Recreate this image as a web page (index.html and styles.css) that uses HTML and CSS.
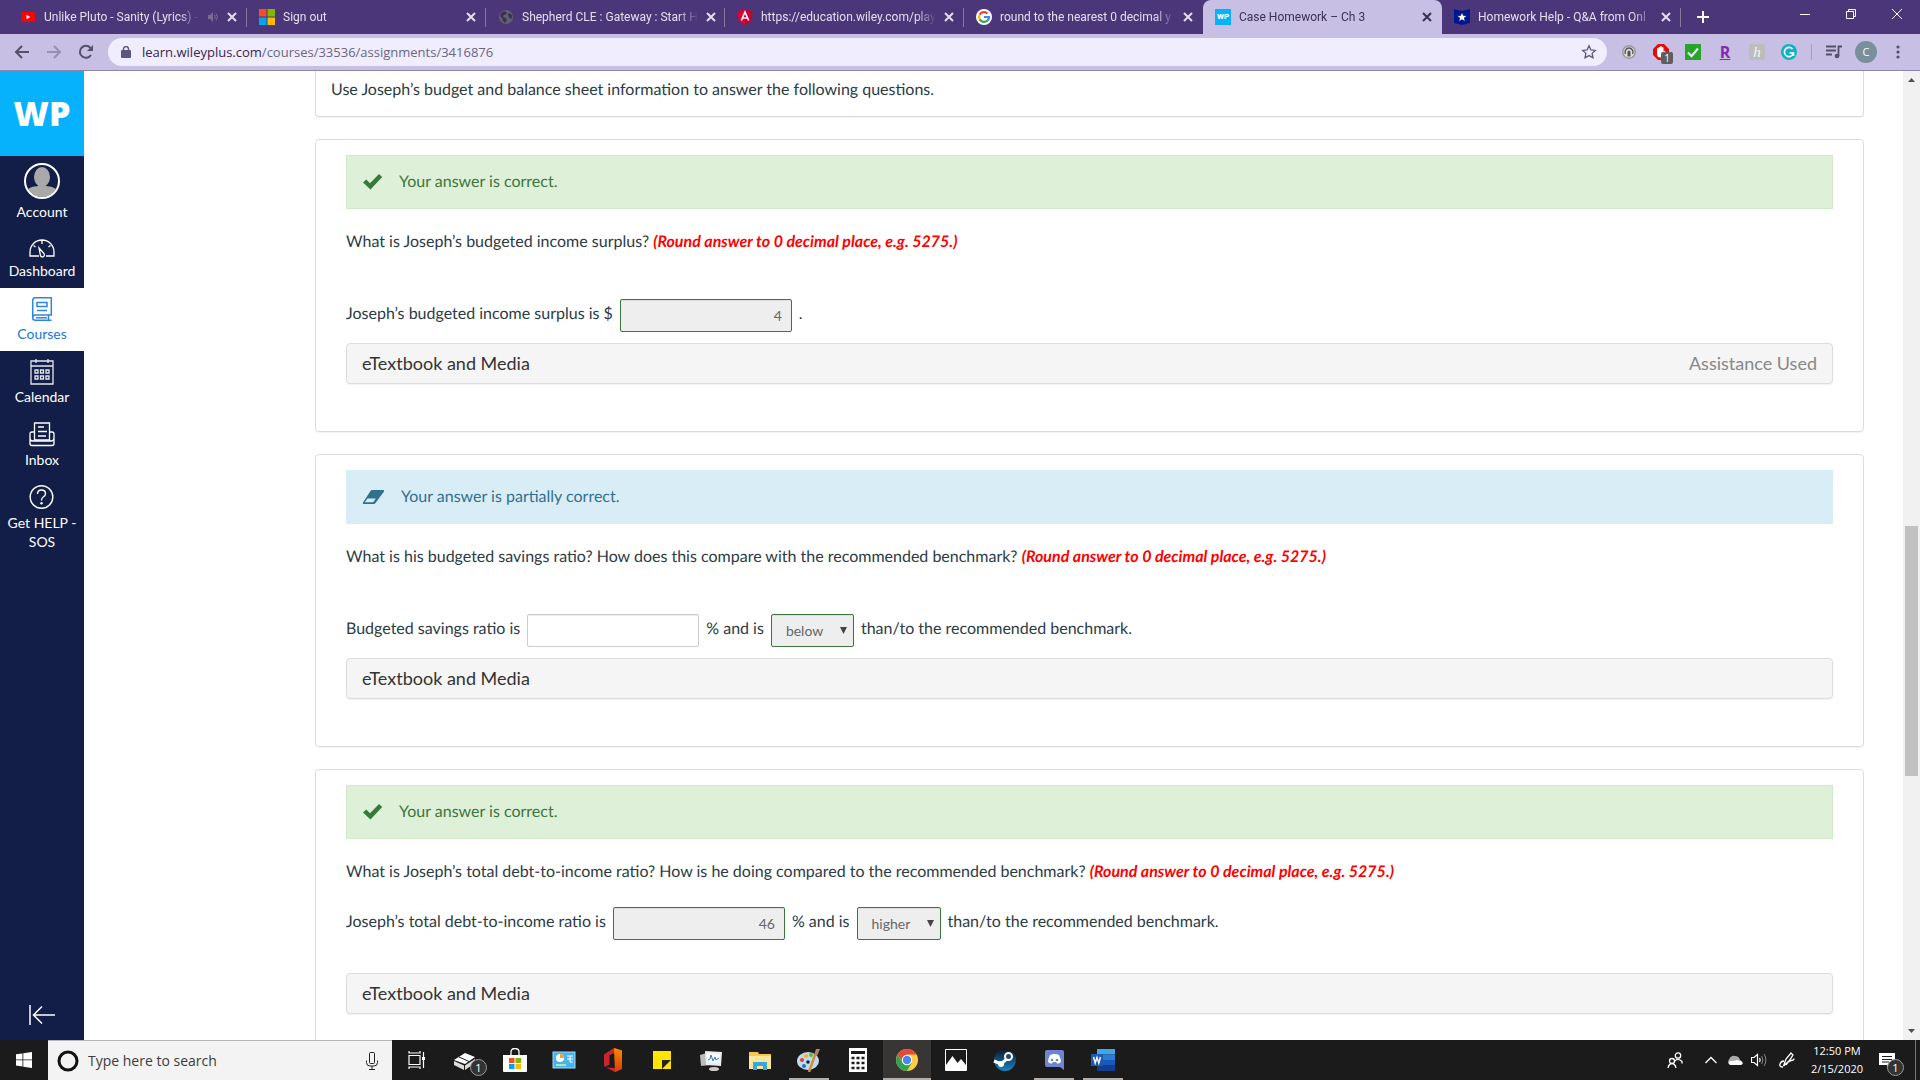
FILE: index.html
```html
<!DOCTYPE html>
<html lang="en">
<head>
    <meta charset="UTF-8">
    <meta name="viewport" content="width=device-width, initial-scale=1.0">
    <title>Case Homework – Ch 3</title>
    <link rel="stylesheet" href="styles.css">
</head>
<body>
    <!-- browser tabs -->
    <header class="tab-bar">
        <div class="tab">
            <svg class="favicon" viewBox="0 0 16 16"><rect x="1" y="3" width="14" height="10" rx="2" fill="#f00"/><path d="M6.5 5.800v4.400L10.300 8z" fill="#fff"/></svg>
            <span class="tab-title">Unlike Pluto - Sanity (Lyrics) -</span>
            <svg class="tab-sound" viewBox="0 0 12 12"><path d="M1 4h2l3-3v10L3 8H1z" fill="#786a94"/><path d="M7.500 4q1.500 2 0 4M9 2.500q3 3.500 0 7" fill="none" stroke="#786a94"/></svg>
            <button class="tab-close" aria-label="Close tab"><svg viewBox="0 0 10 10"><path d="M1 1l8 8M9 1L1 9"/></svg></button>
        </div>
        <div class="tab">
            <svg class="favicon" viewBox="0 0 16 16"><path d="M0 0h7.500v7.500H0z" fill="#f25022"/><path d="M8.500 0H16v7.500H8.500z" fill="#7fba00"/><path d="M0 8.500h7.500V16H0z" fill="#00a4ef"/><path d="M8.500 8.500H16V16H8.500z" fill="#ffb900"/></svg>
            <span class="tab-title">Sign out</span>
            <button class="tab-close" aria-label="Close tab"><svg viewBox="0 0 10 10"><path d="M1 1l8 8M9 1L1 9"/></svg></button>
        </div>
        <div class="tab">
            <svg class="favicon" viewBox="0 0 16 16"><circle cx="8" cy="8" r="7" fill="#5f6368"/><path d="M3 4l3-2 2 1 1 2-3 1-1 2 3 1 1 2-2 3-2-2-1-3-2-2zM11 4l3 2v3l-2 1-1-2-1-2z" fill="#3c2f60"/></svg>
            <span class="tab-title">Shepherd CLE : Gateway : Start H</span>
            <button class="tab-close" aria-label="Close tab"><svg viewBox="0 0 10 10"><path d="M1 1l8 8M9 1L1 9"/></svg></button>
        </div>
        <div class="tab">
            <svg class="favicon" viewBox="0 0 16 16"><path d="M8 0l7.500 2.700L14.300 12 8 16l-6.300-4L.5 2.700z" fill="#dd0031"/><path d="M8 0l7.500 2.700L14.300 12 8 16z" fill="#c3002f"/><path d="M4.300 11.500L8 3l3.700 8.500M5.700 9h4.600" fill="none" stroke="#fff" stroke-width="1.600"/></svg>
            <span class="tab-title">https://education.wiley.com/play</span>
            <button class="tab-close" aria-label="Close tab"><svg viewBox="0 0 10 10"><path d="M1 1l8 8M9 1L1 9"/></svg></button>
        </div>
        <div class="tab no-sep">
            <svg class="favicon" viewBox="0 0 16 16"><circle cx="8" cy="8" r="8" fill="#fff"/><g fill="none" stroke-width="2.200"><path d="M11.500 4.500A5 5 0 0 0 3.700 5.600" stroke="#ea4335"/><path d="M3.700 5.600a5 5 0 0 0 0 4.800" stroke="#fbbc05"/><path d="M3.700 10.400a5 5 0 0 0 7.600 1.300" stroke="#34a853"/><path d="M11.300 11.700Q13 10.300 13 8H8" stroke="#4285f4"/></g></svg>
            <span class="tab-title">round to the nearest 0 decimal y</span>
            <button class="tab-close" aria-label="Close tab"><svg viewBox="0 0 10 10"><path d="M1 1l8 8M9 1L1 9"/></svg></button>
        </div>
        <div class="tab active no-sep">
            <span class="favicon wp-favicon">WP</span>
            <span class="tab-title">Case Homework – Ch 3</span>
            <button class="tab-close" aria-label="Close tab"><svg viewBox="0 0 10 10"><path d="M1 1l8 8M9 1L1 9"/></svg></button>
        </div>
        <div class="tab">
            <svg class="favicon" viewBox="0 0 16 16"><path d="M0 0l8 2 8-2v14l-8 2-8-2z" fill="#00188f"/><path d="M8 4l1.200 2.800 3 .2-2.300 2 .8 3L8 10.300 5.300 12l.8-3-2.300-2 3-.2z" fill="#fff"/></svg>
            <span class="tab-title">Homework Help - Q&amp;A from Onl</span>
            <button class="tab-close" aria-label="Close tab"><svg viewBox="0 0 10 10"><path d="M1 1l8 8M9 1L1 9"/></svg></button>
        </div>
        <button class="new-tab" aria-label="New tab"><svg viewBox="0 0 12 12"><path d="M6 0v12M0 6h12" stroke="#fff" stroke-width="2"/></svg></button>
        <div class="window-buttons">
            <button aria-label="Minimize"><svg viewBox="0 0 10 10"><path d="M0 5.500h10"/></svg></button>
            <button aria-label="Restore"><svg viewBox="0 0 10 10"><path d="M.5 2.500h7v7h-7zM2.500 2.500v-2h7v7h-2"/></svg></button>
            <button aria-label="Close"><svg viewBox="0 0 10 10"><path d="M0 0l10 10M10 0L0 10"/></svg></button>
        </div>
    </header>

    <!-- address bar -->
    <div class="toolbar">
        <button class="tool" aria-label="Back"><svg viewBox="0 0 16 16"><path d="M15 8H2M8 2L2 8l6 6" fill="none" stroke="#54516a" stroke-width="2"/></svg></button>
        <button class="tool" aria-label="Forward"><svg viewBox="0 0 16 16"><path d="M1 8h13M8 2l6 6-6 6" fill="none" stroke="#9890b0" stroke-width="2"/></svg></button>
        <button class="tool" aria-label="Reload"><svg viewBox="0 0 16 16"><path d="M13 11a6 6 0 1 1-.6-7.200" fill="none" stroke="#54516a" stroke-width="2"/><path d="M15 1v6H9z" fill="#54516a"/></svg></button>
        <div class="omnibox">
            <svg class="lock" viewBox="0 0 10 12"><rect x="0" y="4" width="10" height="8" rx="1" fill="#5f5580"/><path d="M2.500 5V3a2.500 2.500 0 0 1 5 0v2" fill="none" stroke="#5f5580" stroke-width="1.400"/></svg>
            <span class="url"><b>learn.wileyplus.com</b>/courses/33536/assignments/3416876</span>
            <svg class="star" viewBox="0 0 16 16"><path d="M8 1.800l1.900 4.100 4.400.5-3.200 3 .9 4.400L8 11.600l-4 2.200.9-4.400-3.200-3 4.400-.5z" fill="none" stroke="#5f5580" stroke-width="1.300"/></svg>
        </div>
        <div class="extensions">
            <svg viewBox="0 0 16 16"><circle cx="8" cy="8" r="7" fill="#999"/><circle cx="8" cy="8" r="5.500" fill="#ddd"/><path d="M4.500 10a4 4 0 1 1 7 0" fill="none" stroke="#555" stroke-width="1.400"/><path d="M6.500 12.500V8a1.500 1.500 0 0 1 3 0v4.500z" fill="#555"/></svg>
            <span class="blocker">
                <svg viewBox="0 0 16 16"><path d="M5 0h6l5 5v6l-5 5H5l-5-5V5z" fill="#e60b0b"/><path d="M4 7V4.500q.8-1 1.600 0V3.200q.8-1 1.600 0v-.8q.8-1 1.600 0v1q.9-1 1.700 0v4.200l1-.9q1.200 0 .8 1L10.500 12q-1 1.500-3 1.500Q4 13.500 4 10z" fill="#fff"/></svg>
                <span class="blocker-count">1</span>
            </span>
            <svg viewBox="0 0 16 16"><path d="M0 0h16v16H0z" fill="#28a428"/><path d="M3 8.500l3.500 3.700L13 4.500" fill="none" stroke="#e8e8f8" stroke-width="2.200"/></svg>
            <span class="ext-r">R</span>
            <span class="ext-h">h</span>
            <svg viewBox="0 0 16 16"><circle cx="8" cy="8" r="8" fill="#10b2c8"/><path d="M11.500 5a4.600 4.600 0 1 0 1 4H8.500M12.500 8.500v3.500" fill="none" stroke="#fff" stroke-width="1.600"/></svg>
        </div>
        <div class="toolbar-end">
            <svg viewBox="0 0 16 14"><path d="M0 1.500h10M0 5.500h10M0 9.500h6" stroke="#54516a" stroke-width="1.800"/><path d="M12.500 11V1.500H16" fill="none" stroke="#54516a" stroke-width="1.800"/><circle cx="11" cy="11" r="2.300" fill="#54516a"/></svg>
            <span class="profile">C</span>
            <svg viewBox="0 0 16 16"><g fill="#54516a"><circle cx="8" cy="3" r="1.600"/><circle cx="8" cy="8" r="1.600"/><circle cx="8" cy="13" r="1.600"/></g></svg>
        </div>
    </div>

    <!-- page -->
    <div class="page">
        <nav class="sidebar">
            <a href="#" class="logo">WP</a>
            <a href="#" class="nav-item account">
                <svg viewBox="0 0 36 36"><defs><clipPath id="face"><circle cx="18" cy="18" r="16"/></clipPath></defs><g clip-path="url(#face)" fill="#a9a9a9"><ellipse cx="18" cy="14" rx="8" ry="10"/><path d="M14 20h8v3q12 1 12 7v6H2v-6q0-6 12-7z"/></g><circle cx="18" cy="18" r="17" fill="none" stroke="#fff" stroke-width="2"/></svg>
                <span>Account</span>
            </a>
            <a href="#" class="nav-item">
                <svg viewBox="0 0 26 26"><g fill="none" stroke="#fff" stroke-width="1.300"><path d="M10 23H1v-4a12 12 0 0 1 24 0v4h-8M13 7v4M4.500 12.500l2 1.500M21.500 12.500l-2 1.500"/><path d="M10 15l5 5.500q1 2.500-1 3.300-2 .5-2.600-1.600z"/></g></svg>
                <span>Dashboard</span>
            </a>
            <a href="#" class="nav-item current">
                <svg viewBox="0 0 26 26"><g fill="none" stroke="#2d86e0" stroke-width="1.500"><path d="M3.700 22V4.500q0-2.800 2.500-2.800h16.100V19H6.500q-2.800 0-2.800 2.800 0 2.500 2.800 2.500h16M19.500 19v5M7 21.700h11"/><path d="M8 6.500h10v4H8zM8 14.500h10"/></g></svg>
                <span>Courses</span>
            </a>
            <a href="#" class="nav-item">
                <svg viewBox="0 0 26 26"><g fill="none" stroke="#e4e6ee" stroke-width="1.300"><path d="M2 2h22v23H2zM2 7h22M7 0v4M19 0v4"/><path d="M6 11h3v3H6zM11.500 11h3v3h-3zM17 11h3v3h-3zM6 17h3v3H6zM11.500 17h3v3h-3zM17 17h3v3h-3z"/></g></svg>
                <span>Calendar</span>
            </a>
            <a href="#" class="nav-item">
                <svg viewBox="0 0 26 26"><g fill="none" stroke="#fff" stroke-width="1.300"><path d="M5.500 18V1h15v17zM9 5h6M9 9.500h9M9 14h8"/><path d="M5.500 10H3q-2 0-2 2v9.500q0 2 2 2h20q2 0 2-2V12q0-2-2-2h-2.500M1 16q0 3 3 3h18q3 0 3-3"/></g></svg>
                <span>Inbox</span>
            </a>
            <a href="#" class="nav-item">
                <svg viewBox="0 0 26 26"><g fill="none" stroke="#fff" stroke-width="1.400"><circle cx="12.500" cy="12" r="11.300"/><path d="M8.500 9q0-4 4-4t4 3.700q0 2-2.300 3.300-1.700 1-1.700 3.500"/></g><circle cx="12.500" cy="18.300" r="1.200" fill="#fff"/></svg>
                <span>Get HELP - SOS</span>
            </a>
            <button class="collapse" aria-label="Minimize navigation"><svg viewBox="0 0 26 20"><path d="M1 0v20M26 10H5M13 1.500L4.500 10l8.500 8.500" fill="none" stroke="#fff" stroke-width="1.500"/></svg></button>
        </nav>

        <main class="content">
            <section class="panel intro">
                <p>Use Joseph’s budget and balance sheet information to answer the following questions.</p>
            </section>

            <section class="panel">
                <div class="alert correct">
                    <svg viewBox="0 0 20 16"><path d="M0 8.500L3.300 5.500 7 9.200 16 0l3.200 3L7.500 15.500z" fill="#367b38"/></svg>
                    Your answer is correct.
                </div>
                <p class="question">What is Joseph’s budgeted income surplus? <em>(Round answer to 0 decimal place, e.g. 5275.)</em></p>
                <div class="answer">
                    <label for="surplus">Joseph’s budgeted income surplus is $</label>
                    <input type="text" id="surplus" class="graded" value="4" readonly>
                    <span>.</span>
                </div>
                <button class="media"><span>eTextbook and Media</span><span class="used">Assistance Used</span></button>
            </section>

            <section class="panel">
                <div class="alert partial">
                    <svg class="eraser" viewBox="0 0 23 16"><path d="M10 1h11.500q1 .3.500 1.500L13.500 14q-.7 1-1.500 1H1.500Q.3 14.600 1 13.500L8.500 2q.7-1 1.500-1z" fill="#31708f"/><path d="M5.500 9.500h8.300l-2.600 3.800H2.800z" fill="#d9edf7"/></svg>
                    Your answer is partially correct.
                </div>
                <p class="question">What is his budgeted savings ratio? How does this compare with the recommended benchmark? <em>(Round answer to 0 decimal place, e.g. 5275.)</em></p>
                <div class="answer">
                    <label for="savings">Budgeted savings ratio is</label>
                    <input type="text" id="savings">
                    <label for="savings-compare">% and is</label>
                    <span class="picker">
                        <select id="savings-compare"><option>below</option></select>
                        <svg viewBox="0 0 8 7"><path d="M0 0h7L3.500 7z" fill="#444"/></svg>
                    </span>
                    <span>than/to the recommended benchmark.</span>
                </div>
                <button class="media"><span>eTextbook and Media</span></button>
            </section>

            <section class="panel compact">
                <div class="alert correct">
                    <svg viewBox="0 0 20 16"><path d="M0 8.500L3.300 5.500 7 9.200 16 0l3.200 3L7.500 15.500z" fill="#367b38"/></svg>
                    Your answer is correct.
                </div>
                <p class="question">What is Joseph’s total debt-to-income ratio? How is he doing compared to the recommended benchmark? <em>(Round answer to 0 decimal place, e.g. 5275.)</em></p>
                <div class="answer">
                    <label for="debt">Joseph’s total debt-to-income ratio is</label>
                    <input type="text" id="debt" class="graded" value="46" readonly>
                    <label for="debt-compare">% and is</label>
                    <span class="picker">
                        <select id="debt-compare"><option>higher</option></select>
                        <svg viewBox="0 0 8 7"><path d="M0 0h7L3.500 7z" fill="#444"/></svg>
                    </span>
                    <span>than/to the recommended benchmark.</span>
                </div>
                <button class="media"><span>eTextbook and Media</span></button>
            </section>
        </main>

        <div class="scrollbar">
            <svg viewBox="0 0 7 4"><path d="M0 4h7L3.500 0z" fill="#505050"/></svg>
            <div class="track"><div class="thumb"></div></div>
            <svg viewBox="0 0 7 4"><path d="M0 0h7L3.500 4z" fill="#505050"/></svg>
        </div>
    </div>

    <!-- windows taskbar -->
    <footer class="taskbar">
        <button class="start" aria-label="Start"><svg viewBox="0 0 16 16"><path d="M0 2.300l6.500-.9v6.100H0zM7.300 1.300L16 0v7.500H7.300zM0 8.300h6.500v6.200L0 13.600zM7.300 8.300H16V16l-8.700-1.300z" fill="#fff"/></svg></button>
        <div class="search">
            <svg class="cortana" viewBox="0 0 22 22"><circle cx="11" cy="11" r="9" fill="none" stroke="#111" stroke-width="3"/></svg>
            <input type="text" placeholder="Type here to search" aria-label="Search">
            <svg class="mic" viewBox="0 0 12 18"><g fill="none" stroke="#222"><rect x="3.500" y=".5" width="5" height="11" rx="1"/><path d="M.5 8.500v2q0 3.500 3.500 3.500h4q3.500 0 3.500-3.500v-2M6 14v3.500M3 17.500h6"/></g></svg>
        </div>
        <div class="apps">
            <button aria-label="Task view"><svg viewBox="0 0 24 24"><g fill="none" stroke="#fff" stroke-width="1.200"><path d="M4 7.500h11v9H4zM4 3v2h11V3M4 21v-2h11v2M18.500 4v16"/></g><path d="M17 9h3v3h-3z" fill="#fff"/></svg></button>
            <button aria-label="Inventory"><svg viewBox="0 0 24 24"><path d="M0 12L11 5l10 4-10 7z" fill="#fff"/><path d="M0 13l10 4.500v4.500L0 17zM11 17.500L21 11v4l-10 7z" fill="#ddd"/><path d="M5 9l10 4.500" stroke="#1b1b1b"/></svg><span class="count">1</span></button>
            <button aria-label="Store"><svg viewBox="0 0 24 24"><path d="M0 7h24v16q0 1-1 1H1q-1 0-1-1z" fill="#fff"/><path d="M8 9V4q0-3.500 4-3.500T16 4v5" fill="none" stroke="#fff" stroke-width="1.300"/><path d="M6 10h5.500v5H6z" fill="#f25022"/><path d="M12.500 10H18v5h-5.500z" fill="#7fba00"/><path d="M6 16h5.500v5H6z" fill="#00a4ef"/><path d="M12.500 16H18v5h-5.500z" fill="#ffb900"/></svg></button>
            <button aria-label="Control panel"><svg viewBox="0 0 24 24"><rect x="1" y="4" width="22" height="16" fill="#48b4ec" stroke="#9adcff"/><circle cx="8" cy="10" r="4" fill="#fff"/><path d="M8 10V6a4 4 0 0 1 4 4z" fill="#f7a030"/><path d="M4 17h10" stroke="#d8f0a0" stroke-width="1.500"/><path d="M15 8h6M15 11h6M18 8v6h3" stroke="#fff" fill="none"/></svg></button>
            <button aria-label="Office"><svg viewBox="0 0 24 24"><defs><linearGradient id="office" x2="0" y2="1"><stop offset="0" stop-color="#ff8a00"/><stop offset="1" stop-color="#d83b01"/></linearGradient></defs><path d="M3 6.500L13 0l8 2.500V21l-7 3-9-4.500 9 .5V5L8.500 7v9.500L4 19q-1-1-1-3z" fill="#c9252d"/><path d="M13 0l8 2.500V21l-7 3z" fill="url(#office)"/></svg></button>
            <button aria-label="Sticky notes"><svg viewBox="0 0 24 24"><path d="M3 3h18v18H3z" fill="#ffe400"/><path d="M12 21v-9h9z" fill="#222"/></svg></button>
            <button aria-label="Performance monitor"><svg viewBox="0 0 24 24"><path d="M1 7l10-3v13l-9 1z" fill="#b9bdbf"/><path d="M6 3l17 1-1 14-15-1z" fill="#ececec"/><path d="M8 5l13 1-1 9-12-1z" fill="#f7fbff"/><path d="M9 12l2-1 1-4 2 6 2-4 1 3 3-2" fill="none" stroke="#2684c0"/><ellipse cx="15" cy="21" rx="5" ry="2" fill="#ccc"/></svg></button>
            <button aria-label="File explorer"><svg viewBox="0 0 24 24"><path d="M1 4h9l1 2h12v15H1z" fill="#f5c84c"/><path d="M1 8h22v13H1z" fill="#ffe59a"/><path d="M5 22v-8h14v8h-4v-4H9v4z" fill="#34a7dc"/></svg></button>
            <button class="open" aria-label="Paint"><svg viewBox="0 0 24 24"><ellipse cx="11" cy="13" rx="11" ry="9" fill="#bddcf0"/><circle cx="11" cy="14" r="1.800" fill="#222"/><circle cx="5" cy="12" r="2" fill="#e43c32"/><circle cx="9" cy="8" r="2" fill="#f7b11e"/><circle cx="14" cy="7" r="2" fill="#67b244"/><circle cx="7" cy="18" r="2" fill="#286bcc"/><path d="M12 24l6-17" stroke="#d98b38" stroke-width="2.500"/><path d="M17 7l2-6h4l-3 7z" fill="#b4825b"/></svg></button>
            <button aria-label="Calculator"><svg viewBox="0 0 24 24"><path d="M3 0h18v24H3z" fill="#fff"/><path d="M5 3h14v3H5z" fill="#1b1b1b"/><path d="M5.500 10h3M10.500 10h3M15.500 10h3M5.500 15h3M10.500 15h3M15.500 15h3M5.500 20h3M10.500 20h3M15.500 20h3" stroke="#1b1b1b" stroke-width="2.500"/></svg></button>
            <button class="open focused" aria-label="Chrome"><svg viewBox="0 0 24 24"><circle cx="12" cy="12" r="11" fill="#fc4"/><path d="M2.500 6.500A11 11 0 0 1 21.500 6.500H12L7.500 14z" fill="#e24a3b"/><path d="M2.500 6.500A11 11 0 0 0 12 23l4.800-8.300-9.300-.2z" fill="#34a255"/><circle cx="12" cy="12" r="5.200" fill="#fff"/><circle cx="12" cy="12" r="4.200" fill="#4489f1"/></svg></button>
            <button aria-label="Photos"><svg viewBox="0 0 24 24"><path d="M1.500 1.500h21v21h-21z" fill="#1b1b1b" stroke="#fff"/><path d="M2 17l6.500-9 5 7 3.500-4 5 6v5H2z" fill="#fff"/></svg></button>
            <button aria-label="Steam"><svg viewBox="0 0 24 24"><defs><linearGradient id="steam" x2="0" y2="1"><stop offset="0" stop-color="#10172f"/><stop offset="1" stop-color="#1687c4"/></linearGradient></defs><circle cx="12" cy="12" r="11" fill="url(#steam)"/><path d="M1 13l7 3 7-6" stroke="#fff" stroke-width="3" fill="none"/><circle cx="8" cy="16" r="3" fill="#fff"/><circle cx="15.500" cy="8.500" r="3.500" fill="#24456c" stroke="#fff" stroke-width="2"/></svg></button>
            <button class="open" aria-label="Discord"><svg viewBox="0 0 24 24"><path d="M5 2h15q2 0 2 2v18l-4-3H5q-2 0-2-2V4q0-2 2-2z" fill="#6f85d0"/><path d="M8 7q5-2 9 0 2 4 2 7-2 2-4 1.500l-1-1.500h-3l-1 1.500q-2 .5-4-1.500 0-3 2-7z" fill="#fff"/><circle cx="10" cy="12" r="1.300" fill="#6f85d0"/><circle cx="15" cy="12" r="1.300" fill="#6f85d0"/></svg></button>
            <button class="open" aria-label="Word"><svg viewBox="0 0 24 24"><path d="M6 1h18v5.500H6z" fill="#41a5ee"/><path d="M6 6.500h18V12H6z" fill="#2b7cd3"/><path d="M6 12h18v5.500H6z" fill="#185abd"/><path d="M6 17.500h18V23H6z" fill="#103f91"/><path d="M0 6h12v12H0z" fill="#2059b0"/><path d="M2.500 9l1.700 6L6 9.500 7.800 15l1.700-6" fill="none" stroke="#fff" stroke-width="1.400"/></svg></button>
        </div>
        <div class="tray">
            <svg class="people" viewBox="0 0 16 16"><g fill="none" stroke="#fff" stroke-width="1.300"><circle cx="11" cy="3.500" r="2.700"/><circle cx="5" cy="9" r="2.500"/><path d="M8 9q3-3.500 7 .5v2M1 16q1-4.500 4-4.500T9 16"/></g></svg>
            <svg viewBox="0 0 16 16"><path d="M2.500 11L8 5.500l5.500 5.500" fill="none" stroke="#fff" stroke-width="1.300"/></svg>
            <svg viewBox="0 0 16 16"><path d="M2 12q-2-2 0-4.500Q4 3 8 4q4 0 5 4 3 1 2.500 4z" fill="#aaa"/><path d="M3 13q-2-1-1-3 2-2 5-1 3-2 6 0 3 .5 2.500 3-.5 1-2 1z" fill="#fff"/></svg>
            <svg viewBox="0 0 16 16"><path d="M.5 5.500H3l3.500-3v11L3 10.500H.5zM8.500 6q1.200 2 0 4" fill="none" stroke="#fff" stroke-width="1.200"/><path d="M10.700 4q2.600 4 0 8M13 2q3.800 6 0 12" fill="none" stroke="#888"/></svg>
            <svg class="pen" viewBox="0 0 16 16"><path d="M4 15q-4 0-3-3t4-3M4.500 14L7 7l5-6 2 2-4 6zM7 13q2-4 5-4.500 3 0 3-2" fill="none" stroke="#fff" stroke-width="1.300"/></svg>
            <div class="clock"><span>12:50 PM</span><span>2/15/2020</span></div>
            <button class="notifications" aria-label="Notifications"><svg viewBox="0 0 16 16"><path d="M0 1h16v12h-5l-3 3v-3H0z" fill="#fff"/><path d="M3 4.500h10M3 7.500h10M3 10h7" stroke="#1b1b1b"/></svg><span class="count">1</span></button>
        </div>
    </footer>
</body>
</html>
```

FILE: styles.css
```css
* {
    box-sizing: border-box;
}

body {
    margin: 0;
    height: 100vh;
    display: flex;
    flex-direction: column;
    overflow: hidden;
    background-color: #fff;
    font-family: Lato, sans-serif;
    color: #2d3b45;
}

button {
    padding: 0;
    border: none;
    background: none;
    font-family: inherit;
    color: inherit;
    cursor: pointer;
}

svg {
    display: block;
    flex-shrink: 0;
}

/* tabs */
.tab-bar {
    display: flex;
    height: 34px;
    flex-shrink: 0;
    padding-left: 8px;
    background-color: #4b367a;
    font-family: Roboto, sans-serif;
    font-size: 12px;
    color: #e4deee;
}

.tab {
    display: flex;
    align-items: center;
    flex: 0 1 239px;
    min-width: 0;
    gap: 8px;
    padding: 0 10px 0 12px;
    position: relative;
}

.tab::after {
    content: "";
    position: absolute;
    right: 0;
    top: 8px;
    width: 1px;
    height: 19px;
    background-color: #87789f;
}

.tab.no-sep::after {
    display: none;
}

.tab.active {
    background-color: #c8bfe4;
    border-radius: 8px 8px 0 0;
    color: #3c3154;
}

.favicon {
    width: 16px;
    height: 16px;
    flex-shrink: 0;
}

.wp-favicon {
    background-color: #07b2fa;
    color: #fff;
    font-size: 8px;
    font-weight: 800;
    line-height: 16px;
    text-align: center;
}

.tab-title {
    flex: 1;
    white-space: nowrap;
    -webkit-mask-image: linear-gradient(to right, #000 calc(100% - 20px), transparent);
    mask-image: linear-gradient(to right, #000 calc(100% - 20px), transparent);
}

.tab-sound {
    width: 12px;
    height: 12px;
}

.tab-close svg {
    width: 10px;
    height: 10px;
    stroke: currentColor;
    stroke-width: 2;
}

.new-tab {
    width: 44px;
    display: flex;
    align-items: center;
    justify-content: center;
}

.new-tab svg {
    width: 12px;
}

.window-buttons {
    display: flex;
    margin-left: auto;
}

.window-buttons button {
    width: 46px;
    height: 28px;
    display: flex;
    align-items: center;
    justify-content: center;
}

.window-buttons svg {
    width: 10px;
    height: 10px;
    fill: none;
    stroke: #fff;
}

/* toolbar */
.toolbar {
    display: flex;
    align-items: center;
    height: 37px;
    flex-shrink: 0;
    padding: 0 14px;
    background-color: #c8bfe4;
    border-bottom: 1px solid #8f84a9;
    font-family: "Open Sans", sans-serif;
}

.tool {
    width: 16px;
    margin-right: 16px;
}

.omnibox {
    flex: 1;
    display: flex;
    align-items: center;
    height: 28px;
    padding: 0 10px 0 13px;
    margin-right: 14px;
    margin-left: -2px;
    border-radius: 14px;
    background-color: #f0edff;
}

.lock {
    width: 10px;
    height: 12px;
    margin-right: 11px;
}

.url {
    flex: 1;
    font-size: 13px;
    color: #6a6580;
}

.url b {
    font-weight: normal;
    color: #35284f;
}

.star {
    width: 16px;
}

.extensions {
    display: flex;
    gap: 16px;
    padding-right: 14px;
    border-right: 1px solid #a89fc0;
}

.extensions svg {
    width: 16px;
    height: 16px;
}

.blocker {
    position: relative;
}

.blocker-count {
    position: absolute;
    left: 8px;
    top: 8px;
    width: 12px;
    height: 12px;
    border-radius: 2px;
    background-color: #5e5e5e;
    color: #fff;
    font-size: 10px;
    line-height: 12px;
    text-align: center;
}

.ext-r,
.ext-h {
    width: 16px;
    height: 16px;
    line-height: 16px;
    text-align: center;
}

.ext-r {
    color: #8529b0;
    font-size: 16px;
    font-weight: bold;
    text-decoration: underline;
}

.ext-h {
    border-radius: 2px;
    background-color: #bdbdbd;
    color: #f5f5f5;
    font-family: "Liberation Serif", serif;
    font-size: 15px;
    font-style: italic;
}

.toolbar-end {
    display: flex;
    align-items: center;
    gap: 13px;
    padding-left: 14px;
}

.toolbar-end svg {
    width: 16px;
}

.profile {
    width: 22px;
    height: 22px;
    border-radius: 50%;
    background-color: #78909c;
    color: #fff;
    font-size: 11px;
    line-height: 22px;
    text-align: center;
}

/* page */
.page {
    flex: 1;
    display: flex;
    min-height: 0;
}

.sidebar {
    width: 84px;
    flex-shrink: 0;
    display: flex;
    flex-direction: column;
    background-color: #121e48;
}

.logo {
    height: 85px;
    background-color: #07b2fc;
    color: #fff;
    font-family: "Open Sans", sans-serif;
    font-size: 34px;
    font-weight: 800;
    line-height: 85px;
    text-align: center;
    text-decoration: none;
}

.nav-item {
    display: flex;
    flex-direction: column;
    align-items: center;
    gap: 2px;
    padding: 8px 6px;
    color: #fff;
    font-size: 14px;
    line-height: 19px;
    text-align: center;
    text-decoration: none;
}

.nav-item svg {
    width: 26px;
    height: 26px;
}

.nav-item.account {
    gap: 3px;
    padding: 7px 6px 4px;
}

.nav-item.account svg {
    width: 36px;
    height: 36px;
}

.nav-item.current {
    background-color: #fff;
    color: #1676dd;
}

.collapse {
    margin-top: auto;
    height: 50px;
}

.collapse svg {
    width: 26px;
    margin: 0 auto;
}

.content {
    flex: 1;
    min-width: 0;
    overflow: hidden;
    padding: 0 39px 0 231px;
    font-size: 16px;
    line-height: 24px;
    text-rendering: geometricPrecision;
}

.panel {
    margin-bottom: 22px;
    padding: 15px 30px 47px;
    border: 1px solid #dcdcdc;
    border-radius: 4px;
    box-shadow: 0 1px 1px rgba(0, 0, 0, 0.05);
}

.panel.intro {
    padding: 7px 15px 14px;
    border-top: none;
    border-radius: 0 0 4px 4px;
}

.panel p {
    margin: 0;
}

.alert {
    display: flex;
    align-items: center;
    gap: 16px;
    height: 54px;
    padding: 0 16px;
}

.alert svg {
    width: 20px;
    height: 16px;
}

.alert .eraser {
    width: 23px;
    height: 16px;
}

.alert.correct {
    background-color: #dff0d8;
    border: 1px solid #d0e9c6;
    color: #3c763d;
}

.alert.partial {
    background-color: #d9edf7;
    color: #31708f;
}

.panel .question {
    margin: 21px 0 45px;
}

.question em {
    color: #f00;
    font-weight: bold;
}

.answer {
    display: flex;
    align-items: center;
    gap: 7px;
    height: 33px;
    margin-bottom: 11px;
}

.answer > label,
.answer > span:not(.picker) {
    padding-bottom: 3px;
}

.compact .question {
    margin-bottom: 23px;
}

.compact .answer {
    margin-bottom: 33px;
}

.answer input,
.answer select {
    height: 33px;
    border: 1px solid #ccc;
    border-radius: 2px;
    font-family: inherit;
    font-size: 14px;
    color: #666;
    box-shadow: inset 0 1px 1px rgba(0, 0, 0, 0.075);
}

.answer input {
    width: 172px;
    padding: 0 9px;
    text-align: right;
}

.answer .graded,
.answer select {
    border-color: #3c763d;
    background-color: #eee;
}

.picker {
    position: relative;
}

.picker select {
    display: block;
    appearance: none;
    padding: 0 29px 0 14px;
}

.picker svg {
    position: absolute;
    right: 6px;
    top: 13px;
    width: 8px;
    height: 7px;
}

.media {
    display: flex;
    align-items: center;
    justify-content: space-between;
    width: 100%;
    height: 41px;
    padding: 0 15px 2px;
    border: 1px solid #ddd;
    border-radius: 4px;
    background-color: #f5f5f5;
    color: #333;
    font-size: 18px;
    box-shadow: 0 1px 1px rgba(0, 0, 0, 0.05);
}

.used {
    color: #888;
}

.scrollbar {
    width: 17px;
    display: flex;
    flex-direction: column;
    align-items: center;
    padding: 7px 2px;
    background-color: #f1f1f1;
}

.scrollbar svg {
    width: 7px;
    height: 4px;
}

.track {
    flex: 1;
    width: 100%;
    display: flex;
    flex-direction: column;
}

.track::before {
    content: "";
    flex: 444;
}

.track::after {
    content: "";
    flex: 253;
}

.thumb {
    flex: 250;
    background-color: #c1c1c1;
}

/* taskbar */
.taskbar {
    display: flex;
    height: 40px;
    flex-shrink: 0;
    background-color: #1b1b1b;
    color: #fff;
    font-family: "Open Sans", sans-serif;
}

.start {
    width: 48px;
}

.start svg {
    width: 16px;
    margin: 0 auto;
}

.search {
    width: 344px;
    display: flex;
    align-items: center;
    padding: 0 14px 0 9px;
    border-top: 1px solid #b5b5b5;
    background-color: #f3f3f3;
}

.cortana {
    width: 22px;
}

.search input {
    flex: 1;
    min-width: 0;
    padding: 0 9px;
    border: none;
    background: none;
    font-family: "Open Sans", sans-serif;
    font-size: 14px;
}

.search input::placeholder {
    color: #3c3c3c;
}

.mic {
    width: 12px;
}

.apps {
    display: flex;
    gap: 1px;
    padding-left: 1px;
}

.apps button {
    width: 48px;
    display: flex;
    align-items: center;
    justify-content: center;
    position: relative;
}

.apps svg {
    width: 24px;
}

.apps .open::after {
    content: "";
    position: absolute;
    left: 4px;
    right: 4px;
    bottom: 0;
    height: 2px;
    background-color: #b3aeaa;
}

.apps .focused {
    background-color: #383634;
}

.apps .focused::after {
    left: 0;
    right: 0;
}

.count {
    position: absolute;
    right: 3px;
    bottom: 4px;
    width: 17px;
    height: 17px;
    border: 1px solid #999;
    border-radius: 50%;
    background-color: #333;
    color: #fff;
    font-size: 11px;
    line-height: 15px;
    text-align: center;
}

.tray {
    display: flex;
    align-items: center;
    gap: 8px;
    margin-left: auto;
    padding-right: 4px;
}

.tray svg {
    width: 16px;
    height: 16px;
}

.tray .people {
    margin-right: 12px;
}

.tray .pen {
    margin-left: 4px;
}

.clock {
    display: flex;
    flex-direction: column;
    width: 68px;
    font-size: 11px;
    line-height: 18px;
    text-align: center;
}

.notifications {
    align-self: stretch;
    width: 37px;
    border-right: 1px solid #777;
    position: relative;
}

.notifications .count {
    right: 11px;
}
```
